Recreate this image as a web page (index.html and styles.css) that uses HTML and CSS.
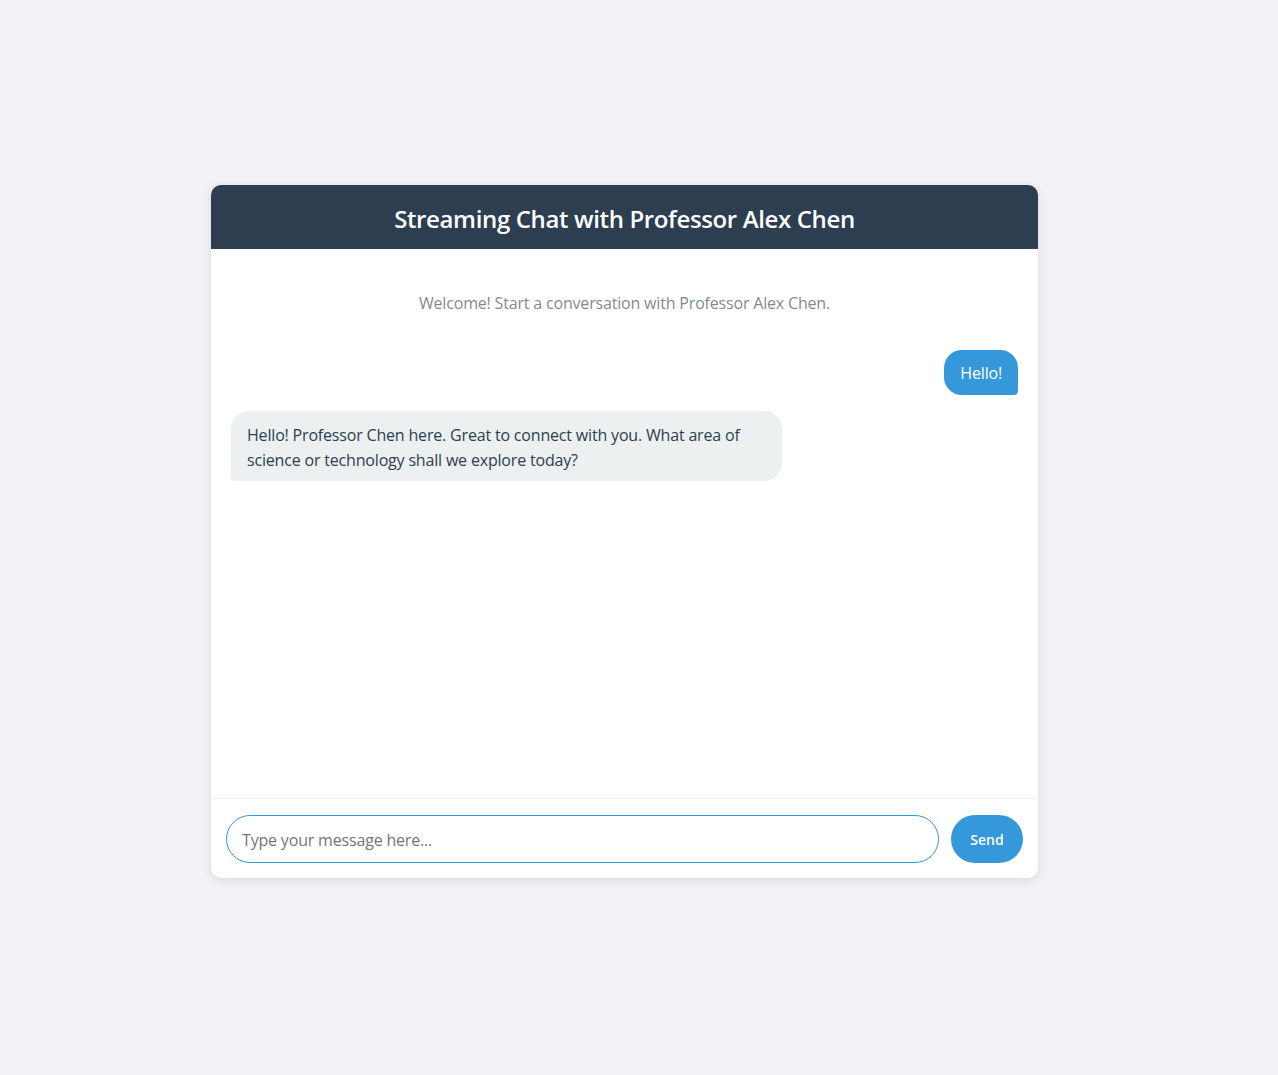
FILE: index.html
```html
<!DOCTYPE html>
<html lang="en">
<head>
<meta charset="utf-8">
<title>Streaming Chat</title>
<link rel="stylesheet" href="styles.css">
</head>
<body>
<div class="chat">
  <div class="chat-header">Streaming Chat with Professor Alex Chen</div>
  <div class="messages">
    <div class="welcome">Welcome! Start a conversation with Professor Alex Chen.</div>
    <div class="msg user">Hello!</div>
    <div class="msg bot">Hello! Professor Chen here. Great to connect with you. What area of science or technology shall we explore today?</div>
  </div>
  <div class="input-area">
    <input class="msg-input" type="text" placeholder="Type your message here...">
    <button class="send-btn">Send</button>
  </div>
</div>
</body>
</html>
```

FILE: styles.css
```css
* { box-sizing: border-box; }
html, body { margin: 0; padding: 0; }
body {
  background: #f0f2f5;
  font-family: "Open Sans", "Noto Sans", sans-serif;
  color: #2c3e50;
  padding: 185px 0 0 211px;
  height: 1075px;
  letter-spacing: -0.18px;
}
.chat {
  width: 827px;
  height: 693px;
  background: #fff;
  border-radius: 10px;
  box-shadow: 0 2px 10px rgba(0,0,0,0.1);
  display: flex;
  flex-direction: column;
  overflow: hidden;
}
.chat-header {
  background: #2c3e50;
  color: #fff;
  height: 64px;
  display: flex;
  align-items: center;
  justify-content: center;
  font-size: 24px;
  font-weight: 600;
  letter-spacing: -0.36px;
  padding-top: 2px;
}
.messages {
  flex: 1;
  padding: 20px;
  display: flex;
  flex-direction: column;
  gap: 16px;
}
.welcome {
  text-align: center;
  color: #7f8c8d;
  font-size: 16px;
  line-height: 25.6px;
  padding: 22px 0 17px;
}
.msg {
  font-size: 16px;
  line-height: 25px;
  padding: 11px 16px 9px;
  border-radius: 18px;
  max-width: 70%;
}
.msg.user {
  align-self: flex-end;
  background: #3498db;
  color: #fff;
  border-bottom-right-radius: 4px;
}
.msg.bot {
  align-self: flex-start;
  background: #ecf0f1;
  color: #2c3e50;
  border-bottom-left-radius: 4px;
  padding: 12px 16px 8px;
}
.input-area {
  border-top: 1px solid #eee;
  padding: 16px 15px 15px;
  display: flex;
  gap: 12px;
}
.msg-input {
  flex: 1;
  height: 48px;
  border: 1px solid #3498db;
  border-radius: 24px;
  padding: 1px 15px 0;
  font-family: inherit;
  font-size: 16px;
  letter-spacing: -0.18px;
  color: #2c3e50;
  outline: none;
}
.msg-input::placeholder { color: #757575; }
.send-btn {
  width: 72px;
  height: 48px;
  background: #3498db;
  color: #fff;
  border: none;
  border-radius: 24px;
  font-family: inherit;
  font-size: 14px;
  font-weight: 600;
  padding-top: 1px;
}
```
